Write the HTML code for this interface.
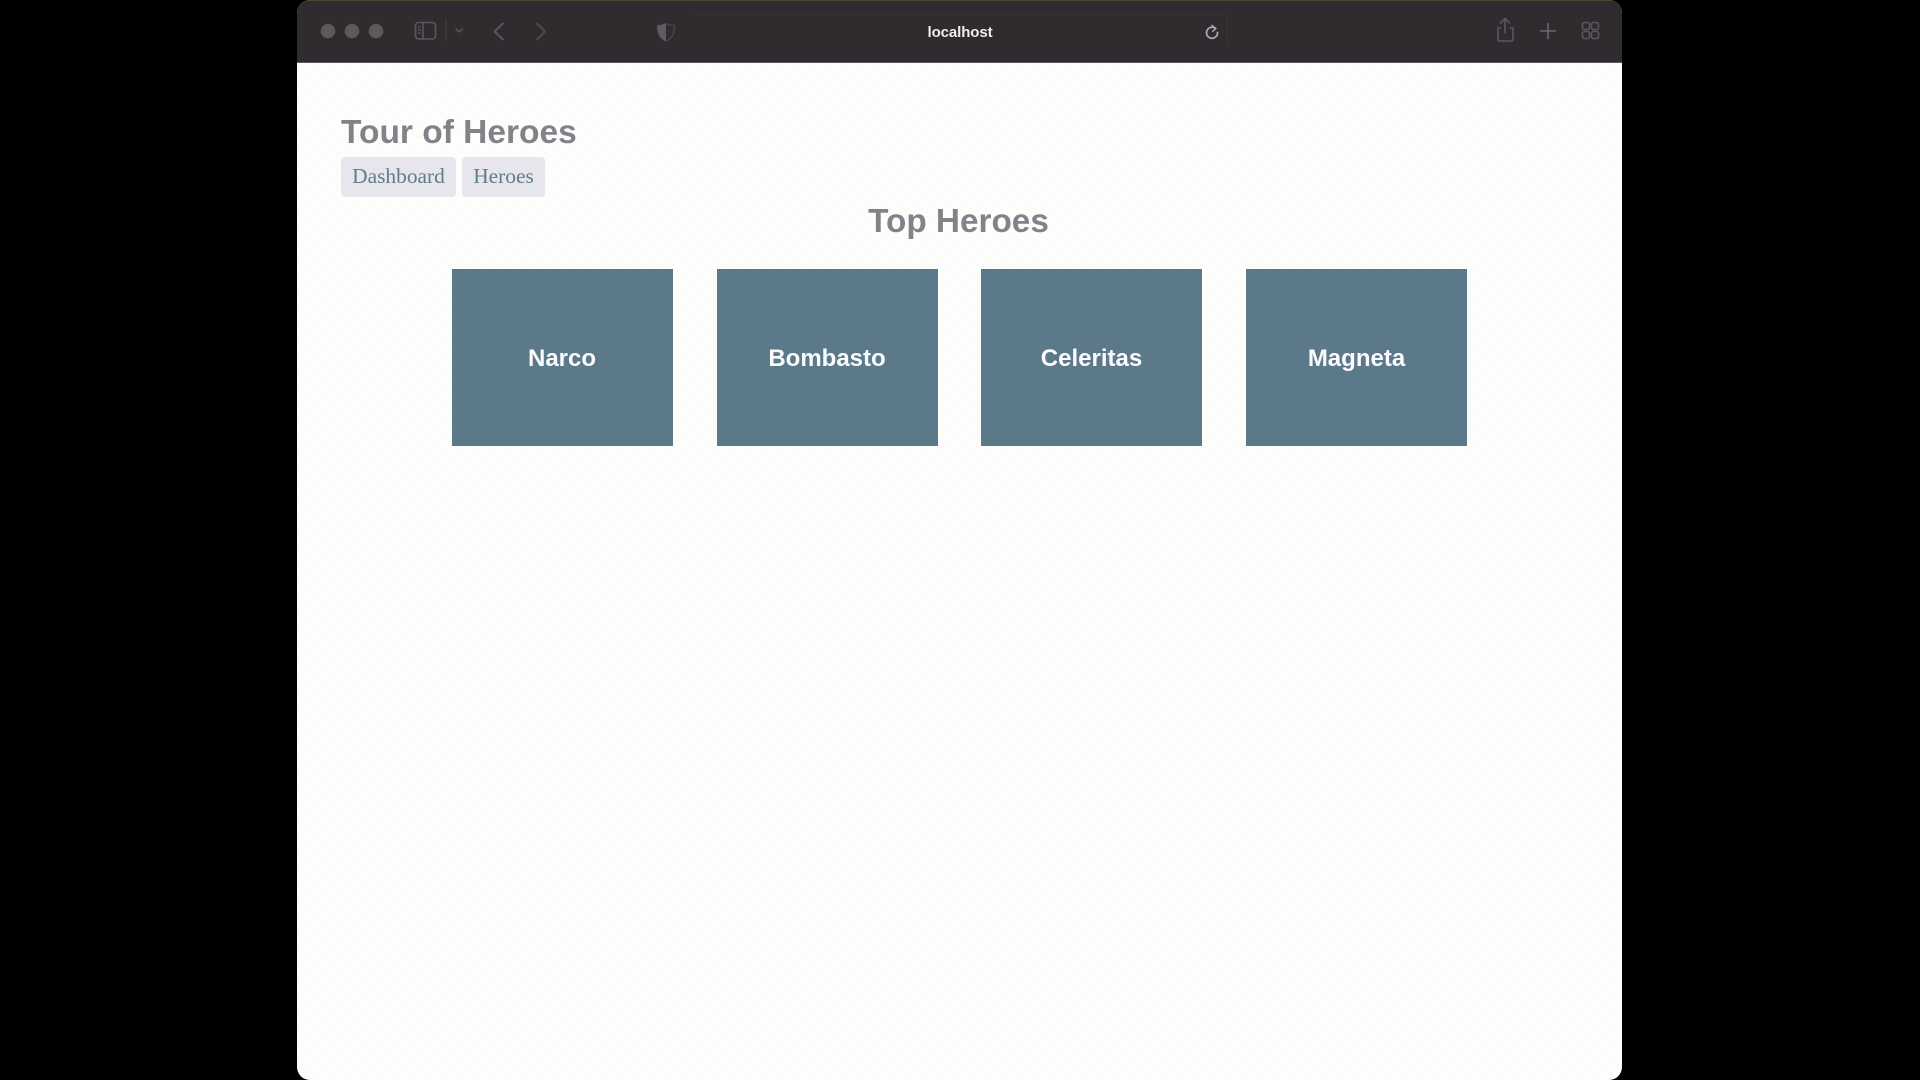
<!DOCTYPE html>
<html lang="en">
<head>
<meta charset="utf-8">
<title>Tour of Heroes</title>
<style>
html,body{margin:0;padding:0;width:1920px;height:1080px;background:#000;overflow:hidden}
*{box-sizing:border-box}
#win{position:absolute;left:297px;top:0;width:1325px;height:1080px;border-radius:13px;overflow:hidden;
 background-color:#fdfdfe;
 background-image:radial-gradient(circle at 1px 1px,#fbfbc4 0.8px,transparent 1.1px),radial-gradient(circle at 1px 1px,#fbfbc4 0.8px,transparent 1.1px);
 background-size:16px 16px;background-position:0 0,8px 8px}
#bar{position:absolute;left:0;top:0;width:1325px;height:63px;background:#302b2e;border-bottom:1px solid #5d5860}
#bar svg{position:absolute;left:0;top:0}
#host{position:absolute;left:0;top:23.5px;width:1326px;text-align:center;font:700 15px/18px "Liberation Sans",sans-serif;color:#eeeeee;letter-spacing:-.1px}
h1,h2{position:absolute;margin:0;font-family:"Liberation Sans",sans-serif;font-weight:700;color:#828288;white-space:nowrap}
h1{left:44px;top:112.5px;font-size:33.5px;line-height:40px}
h2{left:0;width:1325px;text-align:center;top:203px;font-size:33.3px;line-height:38px;padding-right:2px}
.btn{position:absolute;top:157px;height:40px;background:#e6e6ec;border-radius:4px;color:#607d8b;font:21.4px/39px "Liberation Serif",serif;text-align:center}
.card{position:absolute;top:269px;width:221px;height:177px;background:#5c798a;color:#fbfbfd;font:700 24px/179px "Liberation Sans",sans-serif;text-align:center}
</style>
</head>
<body>
<div id="win">
 <div id="bar">
  <svg width="1325" height="63" viewBox="297 0 1325 63" fill="none" stroke="#5a565c" stroke-width="1.6" stroke-linecap="round" stroke-linejoin="round">
   <rect x="297" y="0" width="1325" height="1" fill="#4a4a30" stroke="none"/>
   <circle cx="328" cy="31" r="7.3" fill="#5c585c" stroke="none"/>
   <circle cx="352" cy="31" r="7.3" fill="#5c585c" stroke="none"/>
   <circle cx="376" cy="31" r="7.3" fill="#5c585c" stroke="none"/>
   <rect x="415.5" y="22.5" width="20" height="16.5" rx="3"/>
   <path d="M423 23v16"/>
   <path d="M418 27h2.5M418 30h2.5M418 33h2.5" stroke-width="1.2"/>
   <path d="M446 20v20" stroke="#45443c" stroke-width="1"/>
   <path d="M456 29l3.2 3 3.2-3" stroke-width="1.5"/>
   <path d="M503 23.500l-8.500 8 8.500 8" stroke-width="2"/>
   <path d="M537 23.500l8 8-8 8" stroke="#4c484d" stroke-width="2"/>
   <path d="M666 23.500c3 1.400 6 2 8.500 2 0 7-1.500 12.500-8.500 15.500-7-3-8.500-8.500-8.500-15.500 2.500 0 5.500-.6 8.500-2z" stroke="#4a464b" stroke-width="1.400"/>
   <path d="M666 23.500c-3 1.400-6 2-8.500 2 0 7 1.500 12.500 8.500 15.500z" fill="#5f5b63" stroke="none"/>
   <path d="M692 14h535v33" stroke="#393437" stroke-width="1"/>
   <path d="M1217.500 32.500a5.500 5.500 0 1 1-1.800-3.800" stroke="#a8a5ab" stroke-width="1.800"/>
   <path d="M1212 25.500l3.800 3-3 2.800" stroke="#a8a5ab" stroke-width="1.500"/>
   <path d="M1500.500 28h-2.500v11.500a1.500 1.500 0 0 0 1.500 1.500h12a1.500 1.500 0 0 0 1.500-1.500v-11.500h-2.500"/>
   <path d="M1505 33v-14M1500.500 23l4.500-4.500 4.500 4.500"/>
   <path d="M1548 23.500v15M1540.500 31h15" stroke="#6a666c"/>
   <rect x="1582.500" y="22.500" width="7" height="7" rx="1.800"/>
   <rect x="1591.500" y="22.500" width="7" height="7" rx="1.800"/>
   <rect x="1582.500" y="31.500" width="7" height="7" rx="1.800"/>
   <rect x="1591.500" y="31.500" width="7" height="7" rx="1.800"/>
  </svg>
  <div id="host">localhost</div>
 </div>
 <h1>Tour of Heroes</h1>
 <div class="btn" style="left:44px;width:115px">Dashboard</div>
 <div class="btn" style="left:165px;width:83px">Heroes</div>
 <h2>Top Heroes</h2>
 <div class="card" style="left:155px;padding-right:1px">Narco</div>
 <div class="card" style="left:420px;padding-right:1px">Bombasto</div>
 <div class="card" style="left:684px">Celeritas</div>
 <div class="card" style="left:949px">Magneta</div>
</div>
</body>
</html>
